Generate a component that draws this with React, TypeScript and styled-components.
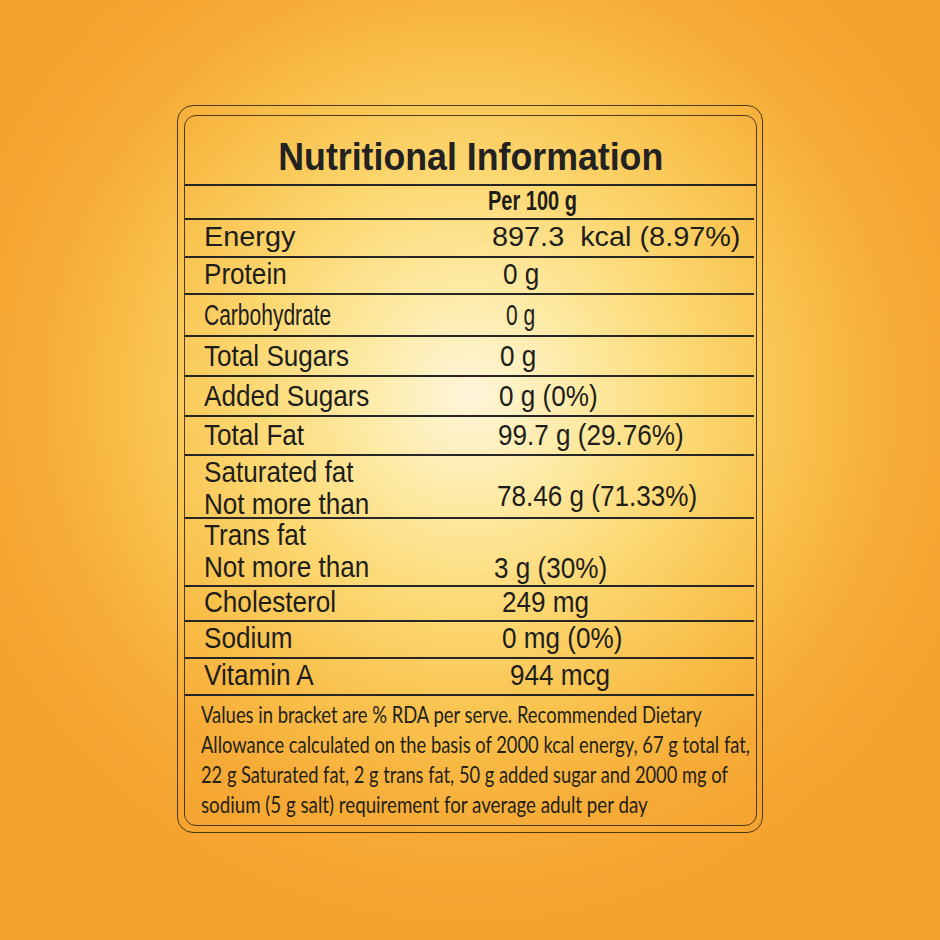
import React, { useLayoutEffect, useRef, useState } from 'react';
import styled, { createGlobalStyle } from 'styled-components';

const GlobalStyle = createGlobalStyle`
  html, body { margin: 0; padding: 0; }
  body { width: 940px; height: 940px; overflow: hidden; }
`;

type Variant = 'wide' | 'narrow' | 'cond';
const V: Record<Variant, { fs: number; sx: number }> = {
  wide: { fs: 28, sx: 1.03 },
  narrow: { fs: 30, sx: 0.87 },
  cond: { fs: 30, sx: 0.7 },
};

const Page = styled.div`
  width: 940px;
  height: 940px;
  box-sizing: border-box;
  padding-top: 105px;
  display: flex;
  justify-content: center;
  align-items: flex-start;
  background: radial-gradient(
    circle at 50% 42%,
    #fef6da 0px,
    #fdeaa4 110px,
    #fcd872 220px,
    #f9c14c 330px,
    #f6aa35 440px,
    #f4a12d 560px
  );
  font-family: 'Liberation Sans', Arial, sans-serif;
  color: #1d1d1b;
`;

const Frame = styled.div`
  box-sizing: border-box;
  width: 586px;
  height: 728px;
  border: 1px solid rgba(45, 35, 15, 0.85);
  border-radius: 16px;
  padding: 9px 5px 6px 6px;
`;

const Inner = styled.div`
  box-sizing: border-box;
  width: 573px;
  height: 711px;
  border: 1px solid rgba(45, 35, 15, 0.85);
  border-radius: 12px;
  display: flex;
  flex-direction: column;
`;

const Title = styled.h1`
  margin: 0;
  box-sizing: border-box;
  height: 70px;
  border-bottom: 2px solid #262626;
  display: flex;
  align-items: flex-end;
  justify-content: center;
  padding-bottom: 8px;
  font-size: 38px;
  line-height: 38px;
  font-weight: 700;
  color: #222;
`;

const TitleText = styled.span`
  display: inline-block;
  white-space: nowrap;
  transform: scaleX(0.94);
  transform-origin: center;
`;

const Table = styled.div`
  margin-right: 2px;
  display: flex;
  flex-direction: column;
`;

const Row = styled.div<{ $h: number; $pb?: number }>`
  box-sizing: border-box;
  height: ${(p) => p.$h}px;
  display: grid;
  grid-template-columns: 286px 1fr;
  align-items: end;
  border-bottom: 2px solid #262626;
  padding: 0 0 ${(p) => (p.$pb ?? 4)}px 19px;
`;

const Label = styled.div<{ $v: Variant; $lh?: number }>`
  font-size: ${(p) => V[p.$v].fs}px;
  line-height: ${(p) => p.$lh ?? 30}px;
  white-space: nowrap;
  transform: scaleX(${(p) => V[p.$v].sx});
  transform-origin: left center;
`;

const Value = styled.div<{ $v: Variant; $indent: number; $lift?: number }>`
  font-size: ${(p) => V[p.$v].fs}px;
  line-height: 30px;
  white-space: pre;
  margin-left: ${(p) => p.$indent}px;
  margin-bottom: ${(p) => p.$lift ?? 0}px;
  transform: scaleX(${(p) => V[p.$v].sx});
  transform-origin: left center;
`;

const HeadValue = styled.div`
  font-size: 27px;
  line-height: 30px;
  font-weight: 700;
  white-space: nowrap;
  margin-left: -2px;
  transform: scaleX(0.74);
  transform-origin: left center;
`;

const Footer = styled.div`
  padding: 3px 0 0 16px;
  font-family: Lato, 'Open Sans', sans-serif;
  font-size: 24px;
  line-height: 30px;
  color: #231f18;
`;

const FootLineText = styled.span`
  display: block;
  width: max-content;
  white-space: nowrap;
  transform-origin: left center;
`;

function FitLine({ width, children }: { width: number; children: React.ReactNode }) {
  const ref = useRef<HTMLSpanElement>(null);
  const [scale, setScale] = useState(1);
  useLayoutEffect(() => {
    const measure = () => {
      const el = ref.current;
      if (el && el.offsetWidth) setScale(width / el.offsetWidth);
    };
    measure();
    if (document.fonts) document.fonts.ready.then(measure);
  }, [width]);
  return (
    <FootLineText ref={ref} style={{ transform: `scaleX(${scale})` }}>
      {children}
    </FootLineText>
  );
}

type Item = {
  label: string[];
  value: string;
  h: number;
  v: Variant;
  indent: number;
  pb?: number;
  lift?: number;
};

const rows: Item[] = [
  { label: ['Energy'], value: '897.3  kcal (8.97%)', h: 38, v: 'wide', indent: 2 },
  { label: ['Protein'], value: '0 g', h: 37, v: 'narrow', indent: 13 },
  { label: ['Carbohydrate'], value: '0 g', h: 42, v: 'cond', indent: 16, pb: 5 },
  { label: ['Total Sugars'], value: '0 g', h: 40, v: 'narrow', indent: 10 },
  { label: ['Added Sugars'], value: '0 g (0%)', h: 40, v: 'narrow', indent: 9 },
  { label: ['Total Fat'], value: '99.7 g (29.76%)', h: 39, v: 'narrow', indent: 8 },
  { label: ['Saturated fat', 'Not more than'], value: '78.46 g (71.33%)', h: 63, v: 'narrow', indent: 7, pb: 0, lift: 9 },
  { label: ['Trans fat', 'Not more than'], value: '3 g (30%)', h: 68, v: 'narrow', indent: 4, pb: 2 },
  { label: ['Cholesterol'], value: '249 mg', h: 35, v: 'narrow', indent: 12 },
  { label: ['Sodium'], value: '0 mg (0%)', h: 37, v: 'narrow', indent: 12 },
  { label: ['Vitamin A'], value: '944 mcg', h: 37, v: 'narrow', indent: 20 },
];

const footLines: { text: string; w: number }[] = [
  { text: 'Values in bracket are % RDA per serve. Recommended Dietary', w: 501 },
  { text: 'Allowance calculated on the basis of 2000 kcal energy, 67 g total fat,', w: 549 },
  { text: '22 g Saturated fat, 2 g trans fat, 50 g added sugar and 2000 mg of', w: 527 },
  { text: 'sodium (5 g salt) requirement for average adult per day', w: 447 },
];

export default function App() {
  return (
    <>
      <GlobalStyle />
      <Page>
        <Frame>
          <Inner>
            <Title>
              <TitleText>Nutritional Information</TitleText>
            </Title>
            <Table>
              <Row $h={34} $pb={2}>
                <div />
                <HeadValue>Per 100 g</HeadValue>
              </Row>
              {rows.map((r) => (
                <Row key={r.label.join(' ')} $h={r.h} $pb={r.pb}>
                  <Label $v={r.v} $lh={r.label.length > 1 ? 32 : 30}>
                    {r.label.map((l, i) => (
                      <div key={i}>{l}</div>
                    ))}
                  </Label>
                  <Value $v={r.v} $indent={r.indent} $lift={r.lift}>
                    {r.value}
                  </Value>
                </Row>
              ))}
            </Table>
            <Footer>
              {footLines.map((f) => (
                <FitLine key={f.text} width={f.w}>
                  {f.text}
                </FitLine>
              ))}
            </Footer>
          </Inner>
        </Frame>
      </Page>
    </>
  );
}
